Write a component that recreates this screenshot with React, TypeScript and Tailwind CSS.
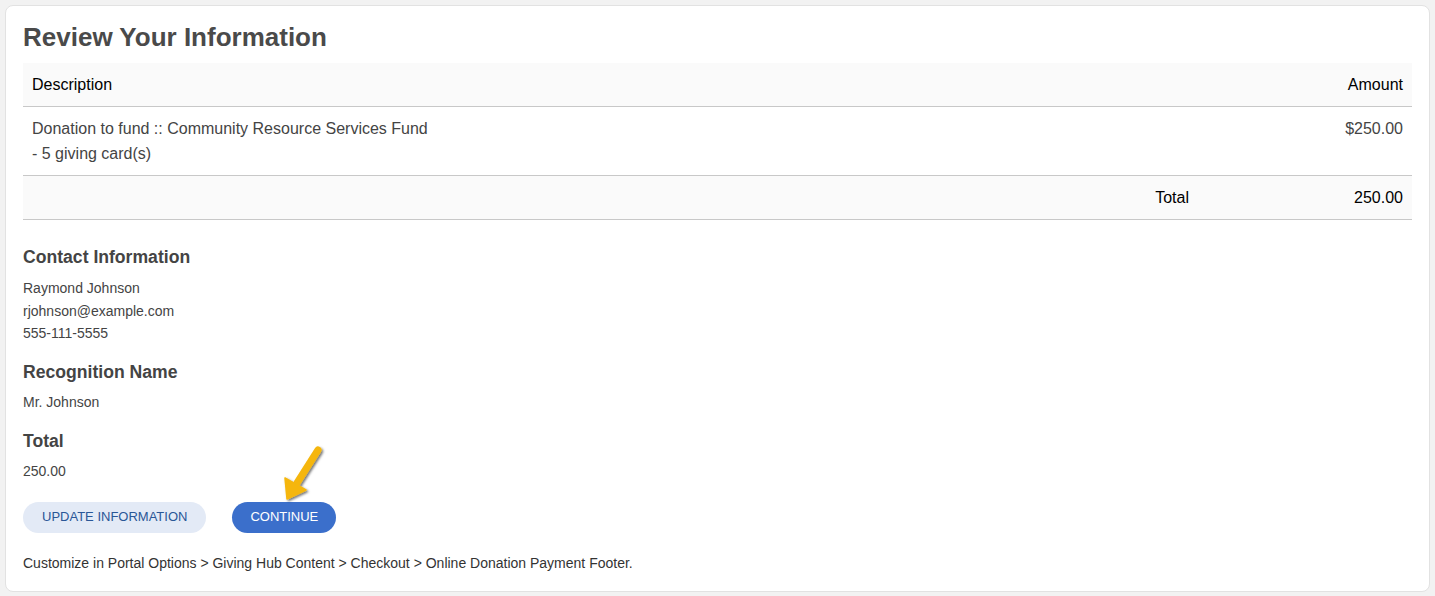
import React from 'react';

const contact = ['Raymond Johnson', 'rjohnson@example.com', '555-111-5555'];

const PointerArrow: React.FC = () => (
  <svg
    className="absolute left-[265px] top-[433px] pointer-events-none"
    width="64"
    height="70"
    viewBox="270 438 64 70"
  >
    <defs>
      <filter id="arrowShadow" x="-30%" y="-30%" width="160%" height="160%">
        <feDropShadow dx="1.5" dy="1.5" stdDeviation="1.2" floodColor="#000" floodOpacity="0.55" />
      </filter>
    </defs>
    <g filter="url(#arrowShadow)">
      <line x1="317" y1="449" x2="296" y2="482" stroke="#f5b60a" strokeWidth="7" strokeLinecap="round" />
      <polygon points="286,498 284,477 305,489" fill="#f5b60a" stroke="#f5b60a" strokeWidth="1.5" strokeLinejoin="round" />
    </g>
  </svg>
);

const App: React.FC = () => {
  return (
    <div className="min-h-[596px] bg-[#f2f2f2] p-[5px] pb-[4px] font-['Liberation_Sans',Arial,sans-serif]">
      <div className="relative bg-white border border-[#e2e2e2] rounded-lg px-[17px] pt-[15px] pb-[18px]">
        <h1 className="text-[26px] leading-[32px] font-bold text-[#4a4a4a] mb-[10px]">Review Your Information</h1>

        {/* Order table */}
        <div className="text-[16px] leading-[25px]">
          <div className="flex justify-between bg-[#fafafa] border-b border-[#c8c8c8] px-[9px] h-[44px] items-center text-black">
            <span>Description</span>
            <span>Amount</span>
          </div>
          <div className="flex justify-between border-b border-[#c8c8c8] px-[9px] pt-[9px] pb-[9px] text-[#444]">
            <div>
              <div>Donation to fund :: Community Resource Services Fund</div>
              <div>- 5 giving card(s)</div>
            </div>
            <span>$250.00</span>
          </div>
          <div className="flex justify-end bg-[#fafafa] border-b border-[#c8c8c8] h-[44px] items-center text-black">
            <span className="pr-[9px]">Total</span>
            <span className="w-[214px] text-right pr-[9px]">250.00</span>
          </div>
        </div>

        {/* Details */}
        <div className="mt-[25px] text-[#444]">
          <h2 className="text-[17.6px] leading-[24px] font-bold">Contact Information</h2>
          <div className="mt-[8px] text-[14px] leading-[22.5px]">
            {contact.map((line) => (
              <div key={line}>{line}</div>
            ))}
          </div>

          <h2 className="mt-[15px] text-[17.6px] leading-[24px] font-bold">Recognition Name</h2>
          <div className="mt-[7px] text-[14px] leading-[22px]">Mr. Johnson</div>

          <h2 className="mt-[16px] text-[17.6px] leading-[24px] font-bold">Total</h2>
          <div className="mt-[7px] text-[14px] leading-[22px]">250.00</div>
        </div>

        <div className="mt-[20px] flex gap-[26px]">
          <button className="h-[31px] px-[19px] rounded-full bg-[#e3eaf6] text-[#2a5797] text-[13px] uppercase">
            Update Information
          </button>
          <button className="h-[31px] px-[18px] rounded-full bg-[#3b6fcb] text-white text-[13px] uppercase">
            Continue
          </button>
        </div>

        <p className="mt-[20px] text-[14px] leading-[20px] text-[#333]">
          Customize in Portal Options &gt; Giving Hub Content &gt; Checkout &gt; Online Donation Payment Footer.
        </p>

        <PointerArrow />
      </div>
    </div>
  );
};

export default App;
